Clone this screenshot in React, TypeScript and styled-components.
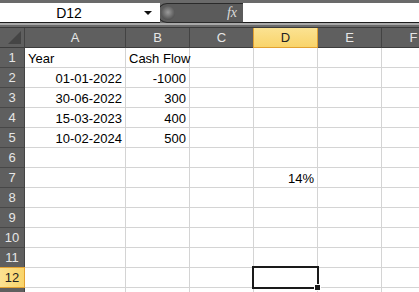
import React from "react";
import styled, { createGlobalStyle } from "styled-components";

const GlobalStyle = createGlobalStyle`
  html, body {
    margin: 0;
    padding: 0;
    background: #ffffff;
    overflow: hidden;
  }
  body {
    font-family: "Liberation Sans", Arial, sans-serif;
  }
`;

const COLS = ["A", "B", "C", "D", "E", "F"];
const WIDTHS = [101, 64, 64, 64, 64, 64];

const Sheet = styled.div`
  width: 419px;
  height: 292px;
  overflow: hidden;
  background: #ffffff;
`;

const TopBar = styled.div`
  display: flex;
  align-items: stretch;
  height: 23px;
  padding-top: 3px;
  box-sizing: border-box;
  background: #6a6a6a;
  width: 480px;
`;

const NameBox = styled.div`
  position: relative;
  width: 160px;
  background: #ffffff;
  border-bottom: 1px solid #1c1c1c;
  box-sizing: border-box;
  display: flex;
  align-items: center;
  justify-content: center;
  font-size: 14px;
  color: #000;
  padding-right: 22px;
`;

const Caret = styled.span`
  position: absolute;
  right: 8px;
  top: 8px;
  width: 0;
  height: 0;
  border-left: 4px solid transparent;
  border-right: 4px solid transparent;
  border-top: 4px solid #111;
`;

const Pill = styled.div`
  width: 86px;
  display: flex;
  align-items: center;
  justify-content: space-between;
  background: #5b5b5b;
  border-radius: 10px 0 0 10px;
  border: 1px solid #2a2a2a;
  border-right: none;
  margin-left: -3px;
  padding: 0 6px 0 3px;
  box-sizing: border-box;
`;

const Knob = styled.span`
  width: 14px;
  height: 14px;
  border-radius: 50%;
  background: radial-gradient(circle at 50% 45%, #9a9a9a 0%, #777 35%, #4a4a4a 80%);
`;

const Fx = styled.span`
  font-family: "Liberation Serif", serif;
  font-style: italic;
  font-size: 14px;
  color: #dcdcdc;
`;

const FormulaBox = styled.div`
  flex: 1;
  background: #ffffff;
  border-bottom: 1px solid #1c1c1c;
`;

const Divider = styled.div`
  height: 5px;
  background: #6a6a6a;
  border-top: 2px solid #a9a9a9;
  box-sizing: border-box;
  border-bottom: 1px solid #3a3a3a;
`;

const Grid = styled.div`
  display: grid;
  grid-template-columns: 25px ${WIDTHS.map((w) => w + "px").join(" ")};
  grid-auto-rows: 20px;
  width: 480px;
`;

const Corner = styled.div`
  position: relative;
  background: #5f5f5f;
  border-right: 1px solid #444;
  border-bottom: 1px solid #3c3c3c;
  box-sizing: border-box;
  &::after {
    content: "";
    position: absolute;
    right: 3px;
    bottom: 3px;
    width: 0;
    height: 0;
    border-left: 13px solid transparent;
    border-bottom: 13px solid #454545;
  }
`;

const ColHead = styled.div<{ $active?: boolean }>`
  display: flex;
  align-items: center;
  justify-content: center;
  font-size: 13px;
  box-sizing: border-box;
  color: ${(p) => (p.$active ? "#222" : "#e6e6e6")};
  background: ${(p) =>
    p.$active ? "linear-gradient(#fbe292, #f9d46a)" : "#5f5f5f"};
  border-right: 1px solid ${(p) => (p.$active ? "#e2a131" : "#434343")};
  border-bottom: 1px solid ${(p) => (p.$active ? "#e2a131" : "#3c3c3c")};
  border-left: ${(p) => (p.$active ? "1px solid #e2a131" : "none")};
  margin-left: ${(p) => (p.$active ? "-1px" : "0")};
`;

const RowHead = styled.div<{ $active?: boolean }>`
  display: flex;
  align-items: center;
  justify-content: center;
  font-size: 13px;
  box-sizing: border-box;
  color: ${(p) => (p.$active ? "#222" : "#e6e6e6")};
  background: ${(p) =>
    p.$active ? "linear-gradient(90deg, #fbe292, #f9d46a)" : "#5f5f5f"};
  border-right: 1px solid ${(p) => (p.$active ? "#e2a131" : "#444")};
  border-bottom: 1px solid ${(p) => (p.$active ? "#e2a131" : "#474747")};
  border-top: ${(p) => (p.$active ? "1px solid #e2a131" : "none")};
  margin-top: ${(p) => (p.$active ? "-1px" : "0")};
`;

const Cell = styled.div<{ $align?: "left" | "right"; $selected?: boolean }>`
  position: relative;
  box-sizing: border-box;
  border-right: 1px solid #d4d4d4;
  border-bottom: 1px solid #d4d4d4;
  font-size: 13px;
  color: #000;
  display: flex;
  align-items: center;
  justify-content: ${(p) => (p.$align === "right" ? "flex-end" : "flex-start")};
  padding: 1px 3px 0 3px;
  white-space: nowrap;
  ${(p) =>
    p.$selected &&
    `
    &::before {
      content: "";
      position: absolute;
      left: -2px;
      top: -2px;
      right: -2px;
      bottom: -2px;
      border: 2px solid #1a1a1a;
      z-index: 2;
    }
    &::after {
      content: "";
      position: absolute;
      right: -4px;
      bottom: -4px;
      width: 5px;
      height: 5px;
      background: #1a1a1a;
      border: 1px solid #ffffff;
      z-index: 3;
    }
  `}
`;

type CellData = { text: string; align: "left" | "right" };

const data: Record<string, CellData> = {
  A1: { text: "Year", align: "left" },
  B1: { text: "Cash Flow", align: "left" },
  A2: { text: "01-01-2022", align: "right" },
  B2: { text: "-1000", align: "right" },
  A3: { text: "30-06-2022", align: "right" },
  B3: { text: "300", align: "right" },
  A4: { text: "15-03-2023", align: "right" },
  B4: { text: "400", align: "right" },
  A5: { text: "10-02-2024", align: "right" },
  B5: { text: "500", align: "right" },
  D7: { text: "14%", align: "right" },
};

// row 13 is only a sliver at the bottom edge, so its number is left off
const ROWS = Array.from({ length: 13 }, (_, i) => i + 1);

export default function App() {
  return (
    <Sheet>
      <GlobalStyle />
      <TopBar>
        <NameBox>
          D12
          <Caret />
        </NameBox>
        <Pill>
          <Knob />
          <Fx>fx</Fx>
        </Pill>
        <FormulaBox />
      </TopBar>
      <Divider />
      <Grid>
        <Corner />
        {COLS.map((c) => (
          <ColHead key={c} $active={c === "D"}>
            {c}
          </ColHead>
        ))}
        {ROWS.map((r) => (
          <React.Fragment key={r}>
            <RowHead $active={r === 12}>{r < 13 ? r : ""}</RowHead>
            {COLS.map((c) => {
              const d = data[c + r];
              return (
                <Cell
                  key={c + r}
                  $align={d?.align}
                  $selected={c === "D" && r === 12}
                >
                  {d?.text}
                </Cell>
              );
            })}
          </React.Fragment>
        ))}
      </Grid>
    </Sheet>
  );
}
